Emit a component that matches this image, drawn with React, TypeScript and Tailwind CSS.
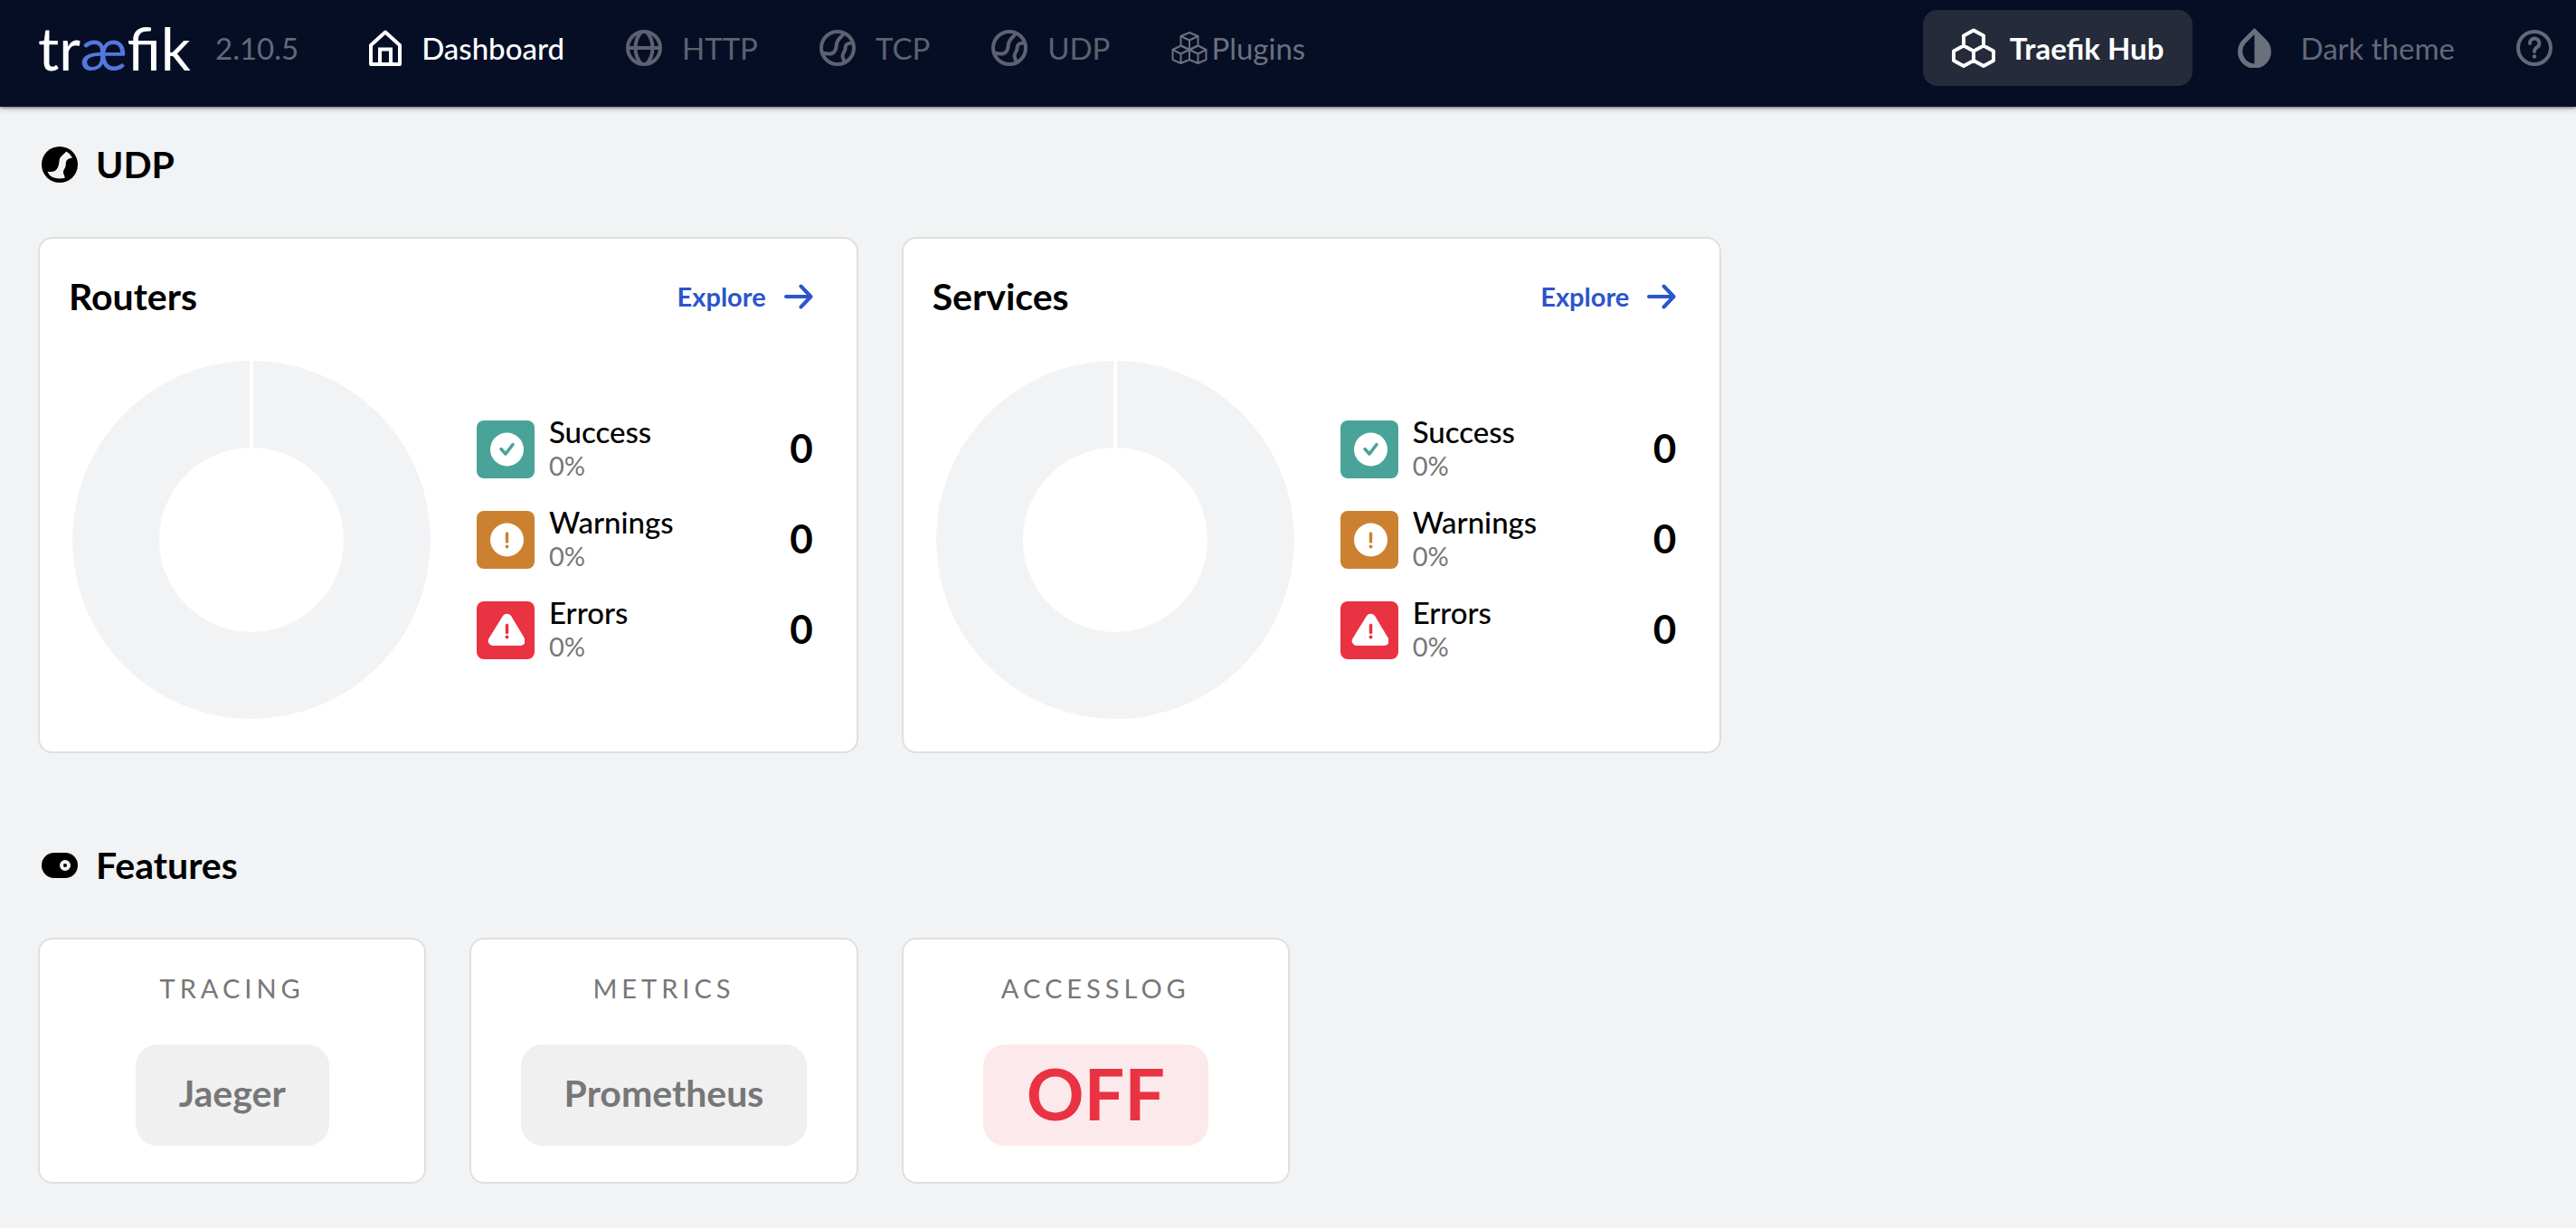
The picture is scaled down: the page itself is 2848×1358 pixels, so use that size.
import React from "react";

function HomeIcon() {
  return (
    <svg width="36" height="40" viewBox="0 0 36 40" fill="none" stroke="currentColor" strokeWidth="4" strokeLinejoin="round" aria-hidden="true">
      <path d="M2 17 18 2.5 34 17v21H2Z" />
      <path d="M12 38V21.5h12V38" strokeLinejoin="miter" />
    </svg>
  );
}

function GlobeIcon() {
  return (
    <svg width="40" height="40" viewBox="0 0 40 40" fill="none" stroke="currentColor" strokeWidth="4" aria-hidden="true">
      <circle cx="20" cy="20" r="18" />
      <path d="M2 20h36M17 2.5C12 8 10.500 14 10.500 20S12 32 17 37.500M23 2.500C28 8 29.500 14 29.500 20S28 32 23 37.500" />
    </svg>
  );
}

function BallIcon() {
  return (
    <svg width="40" height="40" viewBox="0 0 40 40" fill="none" stroke="currentColor" strokeWidth="4" aria-hidden="true">
      <circle cx="20" cy="20" r="18" />
      <path d="M27 3.500C26.500 7 19.500 9 18.800 16.500 18.300 23 16.500 26.500 11 26.500 8 26.500 6 26.300 3 25.500" />
      <path d="M37 14.500C31.500 14 28.500 16 28.500 20.500 28.500 24.500 25.500 25 25.500 29 25.500 31.500 27.500 32.500 27.500 36" />
    </svg>
  );
}

function SolidBallIcon() {
  return (
    <svg width="40" height="40" viewBox="0 0 40 40" aria-hidden="true">
      <circle cx="20" cy="20" r="20" fill="#000" />
      <path d="M27 5.500C25 9 20 10.500 19.500 16 19 23.500 16.500 28 10 28 8.500 28 7.500 28 6.500 27.500 8.500 33.500 14 36.500 25.500 35 26 32 24 31.500 24 28.500 24 25 26.800 24 26.800 19.500 26.800 15 29.500 12.800 34 12.800 32.500 9.500 30 7 27 5.500Z" fill="#f1f3f5" />
    </svg>
  );
}

function CubesIcon() {
  return (
    <svg width="40" height="36" viewBox="0 0 39 36" fill="none" stroke="currentColor" strokeWidth="2" strokeLinejoin="round" aria-hidden="true">
      <path d="M19.500 1 29 5v10.500l-9.500 4.500L10 15.500V5ZM10 5l9.500 4.500L29 5M19.500 9.500V20" />
      <path d="M10 15.500 19.500 20v11L10 35 1 31V20ZM1 20l9 4.500 9.500-4.500M10 24.500V35" />
      <path d="M29 15.500 38 20v11l-9 4-9.500-4V20ZM19.500 20l9.500 4.500L38 20M29 24.500V35" />
    </svg>
  );
}

function HubIcon() {
  return (
    <svg width="48" height="44" viewBox="0 0 48 44" fill="none" stroke="currentColor" strokeWidth="4" strokeLinejoin="round" aria-hidden="true">
      <path d="M24 2.500 35 8.500v11L24 25.500l-11-6v-11ZM13 19.500l11 6V36l-11 6-11-6V25.500ZM35 19.500l11 6V36l-11 6-11-6V25.500Z" />
    </svg>
  );
}

function DropIcon() {
  return (
    <svg width="37" height="44" viewBox="0 0 37 44" fill="currentColor" fillRule="evenodd" aria-hidden="true">
      <path d="M18.500 0 31.600 13A18.500 18.500 0 1 1 5.400 13ZM18.500 7 8.500 17A13.800 13.800 0 0 0 18.500 39.500Z" />
    </svg>
  );
}

function HelpIcon() {
  return (
    <svg width="40" height="40" viewBox="0 0 40 40" fill="none" stroke="currentColor" strokeWidth="4" strokeLinecap="round" aria-hidden="true">
      <circle cx="20" cy="20" r="18" />
      <path d="M15 15a5.200 5.200 0 1 1 8 4.200c-2 1.400-3 2.300-3 4.800" />
      <circle cx="20" cy="29.500" r="2.200" fill="currentColor" stroke="none" />
    </svg>
  );
}

function ArrowIcon() {
  return (
    <svg width="32" height="28" viewBox="0 0 32 28" fill="none" stroke="currentColor" strokeWidth="4" strokeLinecap="round" strokeLinejoin="round" aria-hidden="true">
      <path d="M2 14h27M18.500 2.500 29.500 14l-11 11.500" />
    </svg>
  );
}

function ToggleIcon() {
  return (
    <svg width="40" height="28" viewBox="0 0 40 28" aria-hidden="true">
      <rect width="40" height="28" rx="14" fill="#000" />
      <circle cx="26" cy="14" r="4" fill="#000" stroke="#f1f3f5" strokeWidth="4" />
    </svg>
  );
}

function SuccessIcon() {
  return (
    <svg width="40" height="40" viewBox="0 0 40 40" aria-hidden="true">
      <circle cx="21.500" cy="20" r="18.500" fill="#fff" />
      <path d="m15 19.500 5 5.500 8-10.500" fill="none" stroke="#4aa398" strokeWidth="3.500" strokeLinecap="round" strokeLinejoin="round" />
    </svg>
  );
}

function WarningIcon() {
  return (
    <svg width="40" height="40" viewBox="0 0 40 40" aria-hidden="true">
      <circle cx="21.500" cy="20" r="18.500" fill="#fff" />
      <path d="M21.500 13v9" stroke="#cc8130" strokeWidth="3.500" strokeLinecap="round" />
      <circle cx="21.500" cy="27.500" r="1.900" fill="#cc8130" />
    </svg>
  );
}

function ErrorIcon() {
  return (
    <svg width="42" height="40" viewBox="0 0 42 40" aria-hidden="true">
      <path d="M18 4a5.500 5.500 0 0 1 9 0L42 29a5.200 5.200 0 0 1-4.500 8H7a5.200 5.200 0 0 1-4.500-8Z" fill="#fff" />
      <path d="M22.500 14.500v8" stroke="#e93242" strokeWidth="3.500" strokeLinecap="round" />
      <circle cx="22.500" cy="27.500" r="1.900" fill="#e93242" />
    </svg>
  );
}

function Donut({ label }: { label: string }) {
  return (
    <svg className="size-99 shrink-0" viewBox="0 0 396 396" role="img" aria-label={label}>
      <circle cx="198" cy="198" r="150" fill="none" stroke="#f1f3f5" strokeWidth="96" />
      <path d="M198 0v97" stroke="#fff" strokeWidth="4" />
    </svg>
  );
}

const navItems = [
  { label: "HTTP", icon: <GlobeIcon /> },
  { label: "TCP", icon: <BallIcon /> },
  { label: "UDP", icon: <BallIcon /> },
];

const stats = [
  { label: "Success", tile: "bg-[#4aa398]", icon: <SuccessIcon /> },
  { label: "Warnings", tile: "bg-[#cc8130]", icon: <WarningIcon /> },
  { label: "Errors", tile: "bg-[#e93242]", icon: <ErrorIcon /> },
];

function Header() {
  return (
    <header className="flex h-[118px] items-center bg-[#060e26] pr-[26px] pb-3 pl-[42px] text-[33px] leading-10 text-[#646978] shadow-[0_2px_8px_rgba(0,0,0,0.2),0_1px_3px_rgba(0,0,0,0.5)]">
      <a href="#home" aria-label="traefik" className="w-[196px] text-[65px] leading-[76px] text-white">
        tr<span className="text-[#5278dc]">æ</span>fik
      </a>
      <span>2.10.5</span>
      <nav className="ml-[78px] flex items-center gap-[68px]">
        <a href="#dashboard" aria-current="page" className="flex items-center gap-[22px] font-medium text-white">
          <HomeIcon />
          Dashboard
        </a>
        {navItems.map((item) => (
          <a key={item.label} href={`#${item.label}`} className="flex items-center gap-[22px] text-[#5d6170]">
            {item.icon}
            {item.label}
          </a>
        ))}
        <a href="#plugins" className="flex items-center gap-1 text-[#6b707d]">
          <CubesIcon />
          Plugins
        </a>
      </nav>
      <div className="ml-auto flex items-center">
        <a href="#hub" className="flex h-[84px] items-center gap-4 rounded-2xl bg-[#252b3b] px-8 font-bold text-white">
          <HubIcon />
          Traefik Hub
        </a>
        <button type="button" className="ml-[50px] flex items-center gap-8 text-[#646978]">
          <span className="text-[#6b707d]">
            <DropIcon />
          </span>
          Dark theme
        </button>
        <button type="button" aria-label="Help" className="ml-[68px] text-[#646978]">
          <HelpIcon />
        </button>
      </div>
    </header>
  );
}

function SectionTitle({ icon, children }: { icon: React.ReactNode; children: string }) {
  return (
    <h2 className="flex h-14 items-center gap-5 pl-1 text-[41px] font-bold">
      {icon}
      {children}
    </h2>
  );
}

function StatCard({ title }: { title: string }) {
  return (
    <article className="rounded-2xl border-2 border-[#dedfe0] bg-white px-8 pt-10 pb-9">
      <div className="flex h-12 items-center justify-between pr-4">
        <h3 className="text-[41px] font-bold">{title}</h3>
        <a href={`#${title}`} className="flex items-center gap-5 text-[29px] font-bold text-[#2a55cc]">
          Explore
          <ArrowIcon />
        </a>
      </div>
      <div className="mt-[47px] flex items-center gap-[51px] pl-1">
        <Donut label={`${title} chart`} />
        <ul className="flex grow flex-col gap-9 pr-4">
          {stats.map((s) => (
            <li key={s.label} className="flex h-16 items-center gap-4">
              <span className={`flex size-16 items-center justify-center rounded-lg ${s.tile}`}>{s.icon}</span>
              <div className="grow pb-1">
                <div className="text-[33px] leading-10 font-medium">{s.label}</div>
                <div className="text-[29px] leading-9 text-[#777]">0%</div>
              </div>
              <span className="pb-1 text-[44px] leading-none font-bold">0</span>
            </li>
          ))}
        </ul>
      </div>
    </article>
  );
}

function FeatureCard({ name, value, off }: { name: string; value: string; off?: boolean }) {
  return (
    <article className="flex h-[272px] flex-col items-center gap-10 rounded-2xl border-2 border-[#dedfe0] bg-white pt-8">
      <h3 className="text-[29px] leading-11 tracking-[5px] text-[#777]">{name}</h3>
      <div
        className={
          off
            ? "flex h-28 items-center rounded-3xl bg-[#fce9eb] px-12 pb-1.5 text-[79px] leading-none font-bold text-[#e93242]"
            : "flex h-28 items-center rounded-3xl bg-[#f0f0f0] px-12 pb-1 text-[41px] font-bold text-[#777]"
        }
      >
        {value}
      </div>
    </article>
  );
}

export default function App() {
  return (
    <div className="flex min-h-screen flex-col bg-[#f1f3f5] font-['Lato','Open_Sans',sans-serif] text-black">
      <Header />
      <main className="overflow-hidden pt-9 pb-12 pl-[42px]">
        <section>
          <SectionTitle icon={<SolidBallIcon />}>UDP</SectionTitle>
          <div className="mt-[52px] -mr-2.5 grid grid-cols-3 gap-12">
            <StatCard title="Routers" />
            <StatCard title="Services" />
          </div>
        </section>
        <section className="mt-24">
          <SectionTitle icon={<ToggleIcon />}>Features</SectionTitle>
          <div className="mt-[52px] -mr-2.5 grid grid-cols-6 gap-12">
            <FeatureCard name="TRACING" value="Jaeger" />
            <FeatureCard name="METRICS" value="Prometheus" />
            <FeatureCard name="ACCESSLOG" value="OFF" off />
          </div>
        </section>
      </main>
    </div>
  );
}
